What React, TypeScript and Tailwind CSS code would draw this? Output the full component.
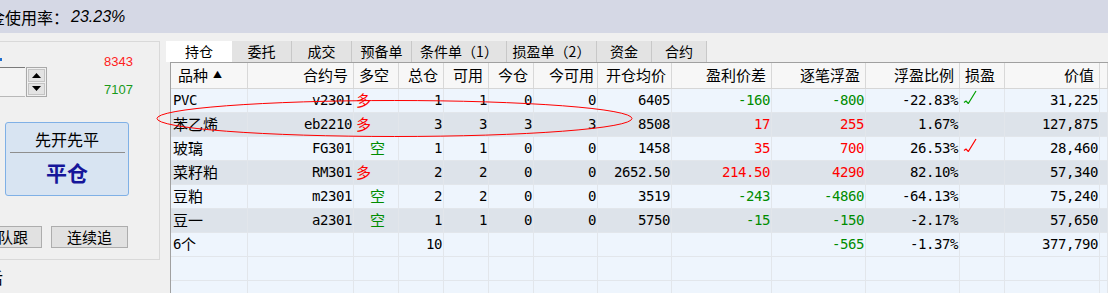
import React from 'react';

type Row = {
  name: string;
  code: string;
  dir: '多' | '空' | '';
  total: string;
  avail: string;
  today: string;
  todayAvail: string;
  open: string;
  diff: string;
  float: string;
  ratio: string;
  check: 'green' | 'red' | null;
  value: string;
};

const ROWS: Row[] = [
  { name: 'PVC', code: 'v2301', dir: '多', total: '1', avail: '1', today: '0', todayAvail: '0', open: '6405', diff: '-160', float: '-800', ratio: '-22.83%', check: 'green', value: '31,225' },
  { name: '苯乙烯', code: 'eb2210', dir: '多', total: '3', avail: '3', today: '3', todayAvail: '3', open: '8508', diff: '17', float: '255', ratio: '1.67%', check: null, value: '127,875' },
  { name: '玻璃', code: 'FG301', dir: '空', total: '1', avail: '1', today: '0', todayAvail: '0', open: '1458', diff: '35', float: '700', ratio: '26.53%', check: 'red', value: '28,460' },
  { name: '菜籽粕', code: 'RM301', dir: '多', total: '2', avail: '2', today: '0', todayAvail: '0', open: '2652.50', diff: '214.50', float: '4290', ratio: '82.10%', check: null, value: '57,340' },
  { name: '豆粕', code: 'm2301', dir: '空', total: '2', avail: '2', today: '0', todayAvail: '0', open: '3519', diff: '-243', float: '-4860', ratio: '-64.13%', check: null, value: '75,240' },
  { name: '豆一', code: 'a2301', dir: '空', total: '1', avail: '1', today: '0', todayAvail: '0', open: '5750', diff: '-15', float: '-150', ratio: '-2.17%', check: null, value: '57,650' },
];

const TABS = [
  { label: '持仓', w: 'w-[66px]', active: true },
  { label: '委托', w: 'w-[60px]' },
  { label: '成交', w: 'w-[60px]' },
  { label: '预备单', w: 'w-[60px]' },
  { label: '条件单（1）', w: 'w-[95px]' },
  { label: '损盈单（2）', w: 'w-[90px]' },
  { label: '资金', w: 'w-[55px]' },
  { label: '合约', w: 'w-[55px]' },
];

const GRID =
  'grid grid-cols-[77px_106px_45px_45px_45px_45px_64px_74px_100px_94px_94px_45px_95px_1fr]';

const CN = "font-['Noto_Sans_CJK_SC',sans-serif]";
const MONO = "font-['DejaVu_Sans_Mono','Noto_Sans_CJK_SC',monospace] text-[14px] tracking-[-0.43px]";

const cell = 'h-[24px] border-r border-b border-[#e2e6eb] flex items-center overflow-hidden whitespace-nowrap';
const num = `${cell} ${MONO} justify-end pr-[1px]`;

function pnlColor(v: string) {
  if (!v) return 'text-black';
  return v.startsWith('-') ? 'text-[#008c00]' : 'text-[#ff0000]';
}

function Check({ color }: { color: string }) {
  return (
    <svg width="14" height="14" viewBox="0 0 14 14" className="mt-[-8px] ml-[3px]">
      <path d="M1 12.5 L3 11 L5.3 13.5 L13 1" fill="none" stroke={color} strokeWidth="1.2" />
    </svg>
  );
}

function Dir({ d }: { d: string }) {
  if (d === '多') return <span className={`${CN} text-[15px] text-[#ff0000] pl-[2px]`}>多</span>;
  if (d === '空') return <span className={`${CN} text-[15px] text-[#008c00] pl-[16px]`}>空</span>;
  return null;
}

function BodyRow({ r, dark }: { r: Row; dark: boolean }) {
  const bg = dark ? 'bg-[#dde3ea]' : 'bg-[#eef5fd]';
  const isAscii = /^[A-Za-z0-9]+$/.test(r.name);
  return (
    <div className={`${GRID} ${bg}`}>
      <div className={`${cell} pl-[2px] ${isAscii ? MONO : `${CN} text-[15px]`}`}>{r.name}</div>
      <div className={`${num} pr-0`}>{r.code}</div>
      <div className={cell}>
        <Dir d={r.dir} />
      </div>
      <div className={num}>{r.total}</div>
      <div className={num}>{r.avail}</div>
      <div className={num}>{r.today}</div>
      <div className={num}>{r.todayAvail}</div>
      <div className={num}>{r.open}</div>
      <div className={`${num} ${pnlColor(r.diff)}`}>{r.diff}</div>
      <div className={`${num} ${pnlColor(r.float)}`}>{r.float}</div>
      <div className={num}>{r.ratio}</div>
      <div className={cell}>
        {r.check === 'green' && <Check color="#00a000" />}
        {r.check === 'red' && <Check color="#ff0000" />}
      </div>
      <div className={num}>{r.value}</div>
      <div className={cell} />
    </div>
  );
}

function EmptyRow() {
  return (
    <div className={`${GRID} bg-[#eef5fd]`}>
      {Array.from({ length: 14 }, (_, i) => (
        <div key={i} className={cell} />
      ))}
    </div>
  );
}

function PositionTable() {
  const head = 'h-[25px] border-r border-[#d8d8d8] flex items-center whitespace-nowrap text-[15px] ' + CN;
  const hr = `${head} justify-end pr-[5px]`;
  const hl = `${head} pl-[5px]`;
  return (
    <div className="border-l border-[#a0a0a0] w-[938px]">
      {/* Header */}
      <div className={`${GRID} bg-[#f7f7f7] border-t border-b border-[#a0a0a0] border-b-[#d6d6d6]`}>
        <div className={`${head} pl-[7px]`}>
          品种<span className="text-[9px] ml-[5px] mt-[-2px]">▲</span>
        </div>
        <div className={hr}>合约号</div>
        <div className={hl}>多空</div>
        <div className={hr}>总仓</div>
        <div className={hr}>可用</div>
        <div className={hr}>今仓</div>
        <div className={`${head} justify-end pr-[3px]`}>今可用</div>
        <div className={hr}>开仓均价</div>
        <div className={hr}>盈利价差</div>
        <div className={hr}>逐笔浮盈</div>
        <div className={hr}>浮盈比例</div>
        <div className={hl}>损盈</div>
        <div className={hr}>价值</div>
        <div className={head} />
      </div>

      {ROWS.map((r, i) => (
        <BodyRow key={r.code} r={r} dark={i % 2 === 1} />
      ))}

      {/* Summary */}
      <div className={`${GRID} bg-[#eef5fd]`}>
        <div className={`${cell} pl-[2px] ${MONO}`}>
          6<span className={`${CN} text-[15px] tracking-normal`}>个</span>
        </div>
        <div className={cell} />
        <div className={cell} />
        <div className={num}>10</div>
        <div className={cell} />
        <div className={cell} />
        <div className={cell} />
        <div className={cell} />
        <div className={cell} />
        <div className={`${num} text-[#008c00]`}>-565</div>
        <div className={num}>-1.37%</div>
        <div className={cell} />
        <div className={num}>377,790</div>
        <div className={cell} />
      </div>
      <EmptyRow />
      <EmptyRow />
    </div>
  );
}

function LeftPanel() {
  return (
    <div className="w-[160px] shrink-0 pt-[8px]">
      <div className="ml-[-11px] w-[171px] h-[219px] border border-[#d9d9d9] pl-[10px] pt-[10px]">
        <div className="flex w-[133px]">
          <div className="flex flex-col">
            <div className="w-[2px] h-[3px] bg-[#1f6fd0] mt-[6px]" />
            <div className="flex mt-[6px] ml-[-10px]">
              <div className="w-[35px] h-[30px] border-t border-b border-t-[#7a7a7a] border-b-[#b8b8b8] bg-[#f3f3f3]" />
              <div className="w-[21px] h-[30px] border border-[#a9a9a9] flex flex-col p-[1px] gap-[1px] ml-[1px]">
                <div className="flex-1 bg-[#e3e3e3] border border-[#c4c4c4] flex items-center justify-center">
                  <svg width="9" height="5" viewBox="0 0 9 5"><path d="M0 5 L4.5 0 L9 5 Z" fill="#000" /></svg>
                </div>
                <div className="flex-1 bg-[#e3e3e3] border border-[#c4c4c4] flex items-center justify-center">
                  <svg width="9" height="5" viewBox="0 0 9 5"><path d="M0 0 L4.5 5 L9 0 Z" fill="#000" /></svg>
                </div>
              </div>
            </div>
          </div>
          <div className="flex-1 flex flex-col items-end font-['Liberation_Sans',sans-serif] text-[13px] leading-[15px]">
            <span className="text-[#ff2020] mt-[2px]">8343</span>
            <span className="text-[#1a9a1a] mt-[13px]">7107</span>
          </div>
        </div>

        <div className="ml-[5px] mt-[25px] w-[124px] h-[74px] rounded-[3px] border border-[#7fb0e6] bg-[#d8e4f2] flex flex-col items-center">
          <div className={`${CN} text-[16px] leading-[20px] mt-[6px] text-black`}>先开先平</div>
          <div className="w-[115px] h-[1px] bg-[#8e8e8e] mt-[3px]" />
          <div className={`${CN} text-[21px] font-bold leading-[26px] mt-[6px] text-[#16169a]`}>平仓</div>
        </div>

        <div className="flex mt-[30px] gap-[9px] ml-[-10px]">
          <div className={`w-[52px] h-[22px] border border-[#adadad] bg-[#e1e1e1] flex items-center justify-end pr-[13px] ${CN} text-[15px]`}>
            队跟
          </div>
          <div className={`w-[77px] h-[22px] border border-[#adadad] bg-[#e1e1e1] flex items-center justify-center ${CN} text-[15px]`}>
            连续追
          </div>
        </div>
      </div>
      <div className={`${CN} text-[16px] leading-[20px] mt-[7px] ml-[-13px]`}>后</div>
    </div>
  );
}

export default function App() {
  return (
    <div className="relative w-[1108px] h-[293px] overflow-hidden bg-[#f0f0f0] text-black">
      <div className="h-[33px] bg-[#d5d8e5] flex items-center overflow-hidden">
        <span className={`${CN} text-[16px] ml-[-27px] whitespace-nowrap`}>资金使用率：</span>
        <span className="font-['Liberation_Sans',sans-serif] italic text-[16px] ml-[2px]">23.23%</span>
      </div>

      <div className="flex">
        <LeftPanel />
        <div className="flex-1 pt-[8px]">
          <div className="flex ml-[6px] h-[21px] items-end">
            {TABS.map((t) => (
              <div
                key={t.label}
                className={`${t.w} h-[21px] flex items-center justify-center ${CN} text-[14px] whitespace-nowrap ${
                  t.active ? 'bg-white' : 'bg-[#e3e3e3] border-r border-[#c8c8c8] h-[20px]'
                }`}
              >
                {t.label}
              </div>
            ))}
          </div>
          <div className="ml-[10px]">
            <PositionTable />
          </div>
        </div>
      </div>

      <svg className="absolute inset-0 pointer-events-none" width="1108" height="293">
        <ellipse cx="394.5" cy="118.5" rx="237.5" ry="18" fill="none" stroke="#ff0000" strokeWidth="1" />
      </svg>
    </div>
  );
}
